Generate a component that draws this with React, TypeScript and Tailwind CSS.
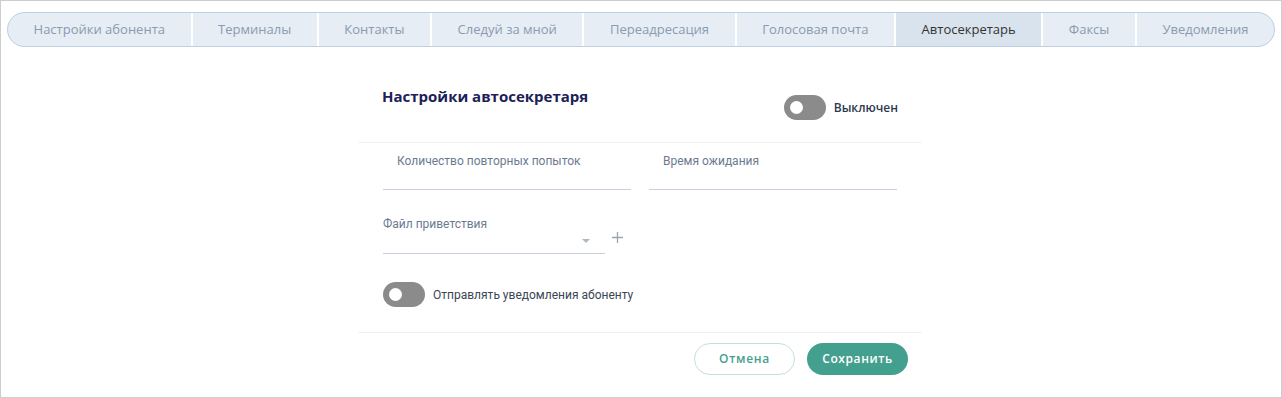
import React from "react";

const tabs = [
  "Настройки абонента",
  "Терминалы",
  "Контакты",
  "Следуй за мной",
  "Переадресация",
  "Голосовая почта",
  "Автосекретарь",
  "Факсы",
  "Уведомления",
];

function Toggle() {
  return (
    <div className="relative w-[42px] h-[25px] rounded-full bg-[#8b8b8b] shrink-0">
      <div className="absolute left-[6px] top-[6px] w-[13px] h-[13px] rounded-full bg-white" />
    </div>
  );
}

export default function App() {
  return (
    <div className="w-[1282px] h-[398px] border border-[#cdcdcd] bg-white overflow-hidden">
      <div className="pt-[11px] px-[6px]">
        <div className="flex h-[35px] rounded-full border border-[#bccfe3] bg-[#e6edf5] overflow-hidden" style={{ fontFamily: '"Open Sans", sans-serif' }}>
          {tabs.map((t, i) => (
            <div
              key={t}
              className={
                "flex-auto flex items-center justify-center text-[13px] whitespace-nowrap px-[10px] " +
                (i > 0 ? "border-l-2 border-white " : "") +
                (t === "Автосекретарь" ? "bg-[#d8e3ee] text-[#333]" : "text-[#8a9bb0]")
              }
            >
              {t}
            </div>
          ))}
        </div>
      </div>

      <div className="ml-[357px] w-[564px]">
        <div className="h-[96px] border-b border-[#f1f1f1] flex justify-between px-6 pt-[37px]">
          <div className="text-[15px] leading-[24px] font-bold text-[#1c2157]" style={{ fontFamily: '"Open Sans", sans-serif' }}>
            Настройки автосекретаря
          </div>
          <div className="flex items-center gap-2 mt-[11px] h-[25px]">
            <Toggle />
            <span className="text-[12px] font-semibold text-[#2b3a4e]" style={{ fontFamily: '"Open Sans", sans-serif' }}>Выключен</span>
          </div>
        </div>

        <div className="px-[25px]" style={{ fontFamily: 'Roboto, sans-serif' }}>
          <div className="flex gap-[18px] pt-[10px]">
            <div className="w-[248px] h-[37px] border-b border-[#c9d2dc]">
              <div className="pl-[14px] text-[12px] leading-[16px] text-[#6b7b8f]">Количество повторных попыток</div>
            </div>
            <div className="w-[248px] h-[37px] border-b border-[#c9d2dc]">
              <div className="pl-[14px] text-[12px] leading-[16px] text-[#6b7b8f]">Время ожидания</div>
            </div>
          </div>

          <div className="flex items-end gap-[6px] pt-[26px]">
            <div className="relative w-[222px] h-[38px] border-b border-[#c9d2dc]">
              <div className="text-[12px] leading-[16px] text-[#6b7b8f]">Файл приветствия</div>
              <div className="absolute right-[15px] top-[23px] w-0 h-0 border-l-[4px] border-r-[4px] border-t-[4px] border-l-transparent border-r-transparent border-t-[#b0b8c2]" />
            </div>
            <svg width="13" height="13" viewBox="0 0 13 13" className="mb-[10px]">
              <path d="M6.5 1v11M1 6.5h11" stroke="#9aa4ae" strokeWidth="1.3" />
            </svg>
          </div>

          <div className="flex items-center gap-2 mt-[28px]">
            <Toggle />
            <span className="text-[12px] text-[#3a4656]">Отправлять уведомления абоненту</span>
          </div>
        </div>

        <div className="mt-[25px] border-t border-[#f1f1f1] flex justify-end gap-3 pt-[10px] pr-[14px]" style={{ fontFamily: '"Open Sans", sans-serif' }}>
          <button className="w-[101px] h-[32px] rounded-full border border-[#c6dfdd] text-[#479f8e] text-[12px] font-semibold tracking-[0.06em] bg-white">
            Отмена
          </button>
          <button className="w-[101px] h-[32px] rounded-full bg-[#44a08e] text-white text-[12px] font-semibold tracking-[0.05em]">
            Сохранить
          </button>
        </div>
      </div>
    </div>
  );
}
